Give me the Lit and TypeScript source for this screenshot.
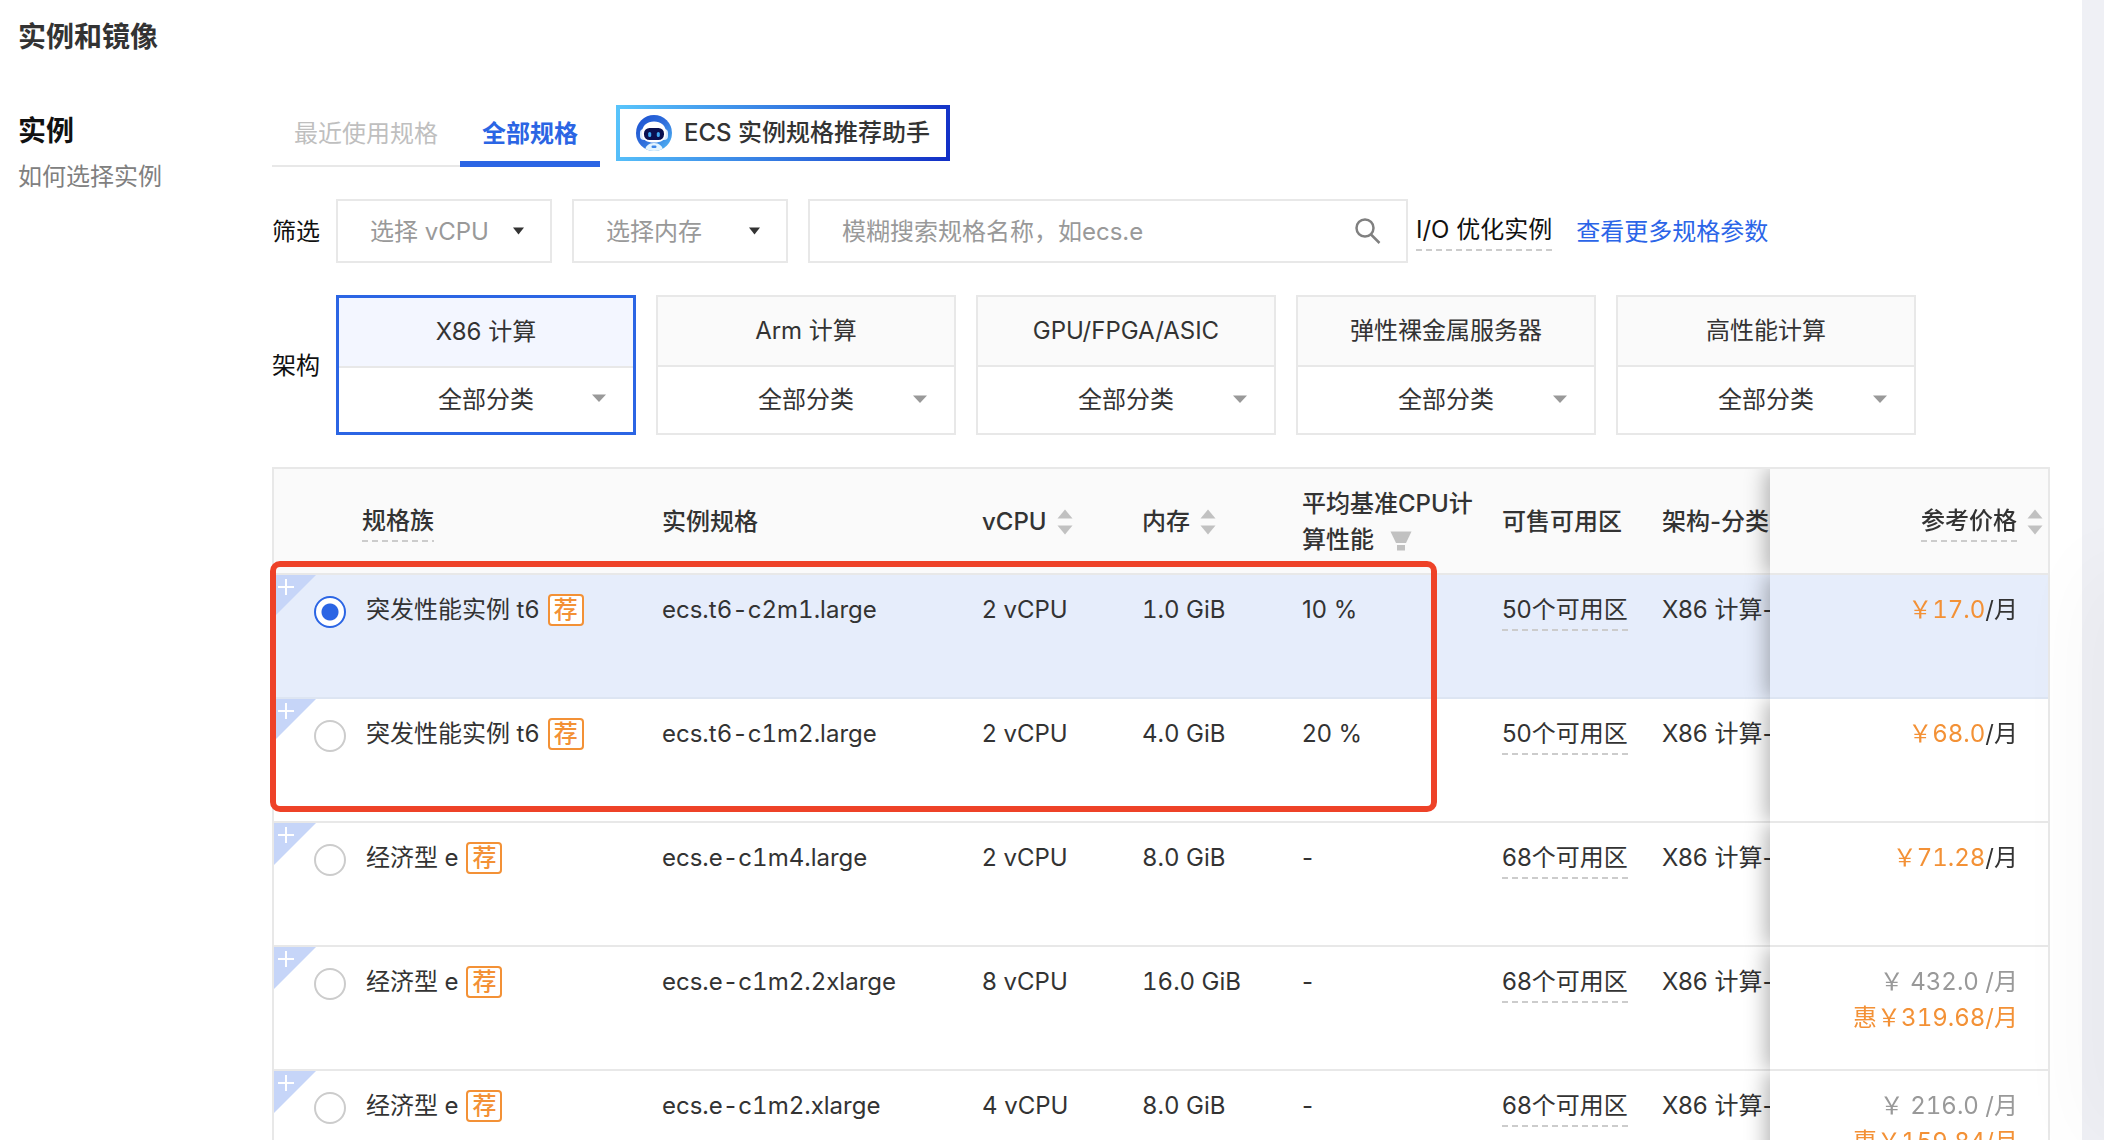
import { LitElement, html, css } from "lit";
import { customElement, property, state } from "lit/decorators.js";
import { classMap } from "lit/directives/class-map.js";

interface Spec {
  family: string;
  name: string;
  cpu: string;
  memory: string;
  baseline: string;
  zones: string;
  price: string;
  discount?: string;
}

const SPECS: Spec[] = [
  { family: "突发性能实例 t6", name: "ecs.t6-c2m1.large", cpu: "2 vCPU", memory: "1.0 GiB", baseline: "10 %", zones: "50个可用区", price: "17.0" },
  { family: "突发性能实例 t6", name: "ecs.t6-c1m2.large", cpu: "2 vCPU", memory: "4.0 GiB", baseline: "20 %", zones: "50个可用区", price: "68.0" },
  { family: "经济型 e", name: "ecs.e-c1m4.large", cpu: "2 vCPU", memory: "8.0 GiB", baseline: "-", zones: "68个可用区", price: "71.28" },
  { family: "经济型 e", name: "ecs.e-c1m2.2xlarge", cpu: "8 vCPU", memory: "16.0 GiB", baseline: "-", zones: "68个可用区", price: "432.0", discount: "319.68" },
  { family: "经济型 e", name: "ecs.e-c1m2.xlarge", cpu: "4 vCPU", memory: "8.0 GiB", baseline: "-", zones: "68个可用区", price: "216.0", discount: "159.84" },
];

const ARCHITECTURES = ["X86 计算", "Arm 计算", "GPU/FPGA/ASIC", "弹性裸金属服务器", "高性能计算"];

const base = css`
  *, *::before, *::after { box-sizing: border-box; }
  button, input, select {
    font: inherit;
    color: inherit;
    margin: 0;
    padding: 0;
    border: 0;
    border-radius: 0;
    background: none;
    outline: none;
  }
  button, select { cursor: pointer; }
  svg { display: block; flex: none; }
  .hinted {
    display: inline-block;
    padding-bottom: 3px;
    background: repeating-linear-gradient(90deg, #ccc 0 6px, transparent 6px 10px) left bottom / 100% 2px no-repeat;
    line-height: 36px;
    white-space: nowrap;
  }
`;

@customElement("robot-icon")
class RobotIcon extends LitElement {
  static styles = css`:host { display: block; } svg { display: block; }`;
  render() {
    return html`
      <svg width="36" height="36" viewBox="0 0 36 36" aria-hidden="true">
        <defs>
          <linearGradient id="ring" x1="0" y1="0" x2="1" y2="1">
            <stop offset="0" stop-color="#1b4fd0"></stop>
            <stop offset="0.5" stop-color="#2f6fdc"></stop>
            <stop offset="1" stop-color="#55c0f8"></stop>
          </linearGradient>
          <clipPath id="disc"><circle cx="18" cy="18" r="18"></circle></clipPath>
        </defs>
        <g clip-path="url(#disc)">
          <rect width="36" height="36" fill="url(#ring)"></rect>
          <path d="M9 36c0-5 4-8 9-8s9 3 9 8z" fill="#e4f5ff"></path>
          <rect x="4" y="14" width="28" height="11" rx="4" fill="#d9ecff"></rect>
          <path d="M18 6.500c7 0 12 4 12 11.500S25 27.500 18 27.500 6 25.500 6 18 11 6.500 18 6.500z" fill="#fff"></path>
          <rect x="8" y="13" width="20" height="12" rx="5.500" fill="#0a1150"></rect>
          <rect x="12.200" y="17" width="3" height="5" rx="1.500" fill="#3fa9f5"></rect>
          <rect x="20.800" y="17" width="3" height="5" rx="1.500" fill="#3fa9f5"></rect>
          <rect x="15.500" y="30.500" width="5" height="2.500" rx="1.200" fill="#3c86e8"></rect>
        </g>
      </svg>`;
  }
}

@customElement("sort-arrows")
class SortArrows extends LitElement {
  static styles = css`:host { display: block; } svg { display: block; }`;
  render() {
    return html`
      <svg width="16" height="26" viewBox="0 0 16 26" fill="#c1c1c1" aria-hidden="true">
        <path d="M8 0.500 15.500 9.500H0.500z"></path>
        <path d="M8 25.500 15.500 16.500H0.500z"></path>
      </svg>`;
  }
}

@customElement("spec-filters")
class SpecFilters extends LitElement {
  @state() private arch = 0;

  static styles = [base, css`
    :host { display: flex; flex-direction: column; gap: 32px; }
    .row { display: flex; align-items: center; }
    .label { flex: none; width: 64px; color: #111; }
    .label, .more { padding-top: 2px; }
    .picker { position: relative; flex: none; width: 216px; margin-right: 20px; }
    .picker select {
      display: block;
      width: 100%;
      height: 64px;
      padding: 2px 32px 0;
      border: 2px solid #e8e8e8;
      color: #999;
      background: #fff;
      appearance: none;
    }
    .caret { position: absolute; right: 28px; top: 28px; pointer-events: none; }
    .search {
      display: flex;
      align-items: center;
      flex: 0 1 600px;
      height: 64px;
      margin-right: 8px;
      padding: 0 24px 0 32px;
      border: 2px solid #e8e8e8;
    }
    .search input { flex: 1; min-width: 0; height: 60px; color: #333; }
    .search input::placeholder { color: #999; opacity: 1; }
    .io { color: #111; }
    .more { margin-left: 24px; color: #2b65e8; text-decoration: none; white-space: nowrap; }
    .cards { display: grid; grid-template-columns: repeat(5, minmax(0, 300px)); gap: 20px; flex: 1; }
    .card {
      position: relative;
      display: flex;
      flex-direction: column;
      height: 140px;
      border: 2px solid #e8e8e8;
      color: #333;
    }
    .card button { height: 70px; border-bottom: 2px solid #e8e8e8; background: #fafafa; }
    .card select { flex: 1; width: 100%; background: #fff; appearance: none; text-align-last: center; }
    .card .caret { right: 27px; top: auto; bottom: 30px; }
    .card.on { border: 3px solid #2b65e4; }
    .card.on button { background: #f3f6ff; }
  `];

  private picker(label: string) {
    return html`
      <div class="picker">
        <select aria-label=${label}><option>${label}</option></select>
        <svg class="caret" width="11" height="8" viewBox="0 0 11 8" aria-hidden="true"><path d="M0 0.500h11L5.500 7.500z" fill="#333"></path></svg>
      </div>`;
  }

  render() {
    return html`
      <div class="row">
        <span class="label">筛选</span>
        ${this.picker("选择 vCPU")}${this.picker("选择内存")}
        <label class="search">
          <input type="text" aria-label="模糊搜索规格名称" placeholder="模糊搜索规格名称，如ecs.e">
          <svg width="28" height="28" viewBox="0 0 28 28" fill="none" stroke="#808080" stroke-width="2.500" aria-hidden="true">
            <circle cx="11" cy="11" r="8.500"></circle><path d="M17 17.500 25.500 26"></path>
          </svg>
        </label>
        <span class="io hinted">I/O 优化实例</span>
        <a class="more" href="#specs">查看更多规格参数</a>
      </div>
      <div class="row">
        <span class="label">架构</span>
        <div class="cards">
          ${ARCHITECTURES.map((name, i) => html`
            <div class=${classMap({ card: true, on: i === this.arch })}>
              <button type="button" @click=${() => (this.arch = i)}>${name}</button>
              <select aria-label=${name}><option>全部分类</option></select>
              <svg class="caret" width="14" height="8" viewBox="0 0 14 8" aria-hidden="true"><path d="M0 0.500h14L7 8z" fill="#999"></path></svg>
            </div>`)}
        </div>
      </div>`;
  }
}

@customElement("spec-table")
class SpecTable extends LitElement {
  @property({ attribute: false }) rows: Spec[] = [];
  @state() private selected = 0;

  static styles = [base, css`
    :host { display: block; position: relative; }
    .scroller { overflow-x: auto; scrollbar-width: none; border: 2px solid #e8e8e8; }
    table { width: 100%; min-width: 1952px; table-layout: fixed; border-collapse: separate; border-spacing: 0; color: #333; }
    .c-family { width: 372px; }
    .c-name { width: 320px; }
    .c-small { width: 160px; }
    .c-base { width: 200px; }
    .c-price { width: 278px; }
    th, td { padding: 17px 16px 15px; text-align: left; border-bottom: 2px solid #e8e8e8; line-height: 36px; white-space: nowrap; }
    th { height: 106px; font-weight: 500; background: #fafafa; vertical-align: middle; }
    td { height: 124px; background: #fff; vertical-align: top; }
    .num { font-variant-numeric: tabular-nums; }
    th.family { padding-left: 88px; }
    th.base { padding-right: 0; white-space: normal; }
    .sortable { display: flex; align-items: center; gap: 10px; }
    .funnel { display: inline-block; margin-left: 16px; vertical-align: middle; }
    th.price, td.price { position: sticky; right: 0; text-align: right; box-shadow: -4px 0 20px rgba(0, 0, 0, 0.3); clip-path: inset(0 0 0 -32px); }
    th.price { padding-right: 5px; }
    td.price { padding-right: 30px; }
    th.price .sortable { justify-content: flex-end; }
    td.family { position: relative; padding-left: 40px; }
    .pick { display: flex; align-items: flex-end; gap: 20px; }
    .pick input {
      flex: none;
      width: 32px;
      height: 32px;
      border: 2px solid #ccc;
      border-radius: 50%;
      background: #fff;
      appearance: none;
    }
    .pick input:checked { border-color: #2b65e4; background: radial-gradient(circle, #2b65e4 0 8px, #fff 9px); }
    .pick label { display: flex; align-items: center; gap: 8px; }
    .badge {
      width: 36px;
      height: 32px;
      border: 2px solid #f39136;
      border-radius: 4px;
      background: #fff;
      color: #f39136;
      font-weight: 500;
      line-height: 28px;
      text-align: center;
    }
    .corner { position: absolute; left: 0; top: 0; }
    .on td { background: #e6edfb; border-color: #dde5f2; }
    .amount { color: #f39136; }
    .old { color: #999; }
    .callout {
      position: absolute;
      left: -2px;
      top: 94px;
      width: 1167px;
      height: 251px;
      border: 6px solid #ee4228;
      border-radius: 10px;
      pointer-events: none;
    }
  `];

  private row(spec: Spec, i: number) {
    return html`
      <tr class=${classMap({ on: i === this.selected })}>
        <td class="family num">
          <button class="corner" type="button" aria-label="+">
            <svg width="42" height="42" viewBox="0 0 42 42"><path d="M0 0h42L0 42z" fill="#c6d5f8"></path><path d="M4 12h16M12 4v16" stroke="#fff" stroke-width="2"></path></svg>
          </button>
          <div class="pick">
            <input type="radio" name="spec" id="spec-${i}" .checked=${i === this.selected} @change=${() => (this.selected = i)}>
            <label for="spec-${i}">${spec.family}<span class="badge">荐</span></label>
          </div>
        </td>
        <td class="num">${spec.name}</td>
        <td>${spec.cpu}</td>
        <td class="num">${spec.memory}</td>
        <td>${spec.baseline}</td>
        <td><span class="hinted">${spec.zones}</span></td>
        <td>X86 计算-</td>
        <td class="price num">
          ${spec.discount
            ? html`<div class="old">￥ ${spec.price} /月</div><div class="amount">惠￥${spec.discount}/月</div>`
            : html`<span class="amount">￥${spec.price}</span>/月`}
        </td>
      </tr>`;
  }

  render() {
    return html`
      <div class="scroller">
        <table>
          <colgroup>
            <col class="c-family"><col class="c-name"><col class="c-small"><col class="c-small">
            <col class="c-base"><col class="c-small"><col><col class="c-price">
          </colgroup>
          <thead>
            <tr>
              <th class="family"><span class="hinted">规格族</span></th>
              <th>实例规格</th>
              <th><div class="sortable">vCPU<sort-arrows></sort-arrows></div></th>
              <th><div class="sortable">内存<sort-arrows></sort-arrows></div></th>
              <th class="base">平均基准CPU计算性能<svg class="funnel" width="22" height="20" viewBox="0 0 22 20" fill="#c1c1c1" aria-hidden="true"><path d="M0.500 0.500h21L16 12H6z"></path><path d="M7 14h8v5.500H7z"></path></svg></th>
              <th>可售可用区</th>
              <th>架构-分类</th>
              <th class="price"><div class="sortable"><span class="hinted">参考价格</span><sort-arrows></sort-arrows></div></th>
            </tr>
          </thead>
          <tbody>${this.rows.map((spec, i) => this.row(spec, i))}</tbody>
        </table>
      </div>
      <div class="callout"></div>`;
  }
}

@customElement("app-root")
class AppRoot extends LitElement {
  static styles = [base, css`
    :host {
      display: block;
      position: relative;
      height: 100vh;
      overflow: hidden;
      padding-right: 22px;
      box-sizing: border-box;
      background: #eff0f5;
      font-family: Inter, "Noto Sans CJK SC", sans-serif;
      font-size: 24px;
      line-height: 36px;
      color: #333;
    }
    main { min-height: 100%; padding: 17px 32px 0 18px; background: #fff; }
    h1, h2 { margin: 0; font-size: 28px; line-height: 40px; font-weight: 600; }
    h1 { margin-bottom: 48px; }
    h2 { margin-bottom: 8px; color: #111; }
    .layout { display: grid; grid-template-columns: 254px minmax(0, 1fr); }
    .side { padding-top: 6px; }
    .help { color: #808080; text-decoration: none; }
    .content { display: flex; flex-direction: column; gap: 32px; }
    .top { display: flex; align-items: flex-start; gap: 16px; }
    .tabs { display: flex; }
    .tab { height: 62px; padding: 4px 22px 6px; border-bottom: 2px solid #e8e8e8; color: #bfbfbf; }
    .tab.on { padding-bottom: 2px; border-bottom: 6px solid #2b65e4; color: #2b65e4; font-weight: 600; }
    .assistant {
      display: flex;
      align-items: center;
      gap: 12px;
      height: 56px;
      padding: 0 16px;
      border: 4px solid;
      border-image: linear-gradient(105deg, #58c4fb, #2d6bdd 60%, #122fc6) 1;
      font-weight: 500;
    }
    .shade {
      position: absolute;
      left: 100%;
      top: 50%;
      bottom: 0;
      width: 40px;
      box-shadow: 0 0 90px rgba(0, 0, 0, 0.07);
      pointer-events: none;
    }
  `];

  render() {
    return html`
      <main>
        <h1>实例和镜像</h1>
        <div class="layout">
          <div class="side">
            <h2>实例</h2>
            <a class="help" href="#help">如何选择实例</a>
          </div>
          <div class="content">
            <div class="top">
              <div class="tabs" role="tablist">
                <button class="tab" role="tab" type="button">最近使用规格</button>
                <button class="tab on" role="tab" type="button" aria-selected="true">全部规格</button>
              </div>
              <button class="assistant" type="button"><robot-icon></robot-icon>ECS 实例规格推荐助手</button>
            </div>
            <spec-filters></spec-filters>
            <spec-table .rows=${SPECS}></spec-table>
          </div>
        </div>
      </main>
      <div class="shade"></div>`;
  }
}
